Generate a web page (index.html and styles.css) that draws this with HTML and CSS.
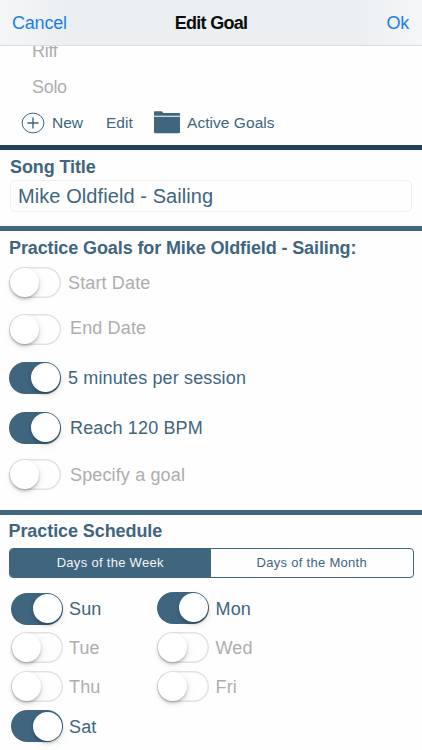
FILE: index.html
```html
<!DOCTYPE html>
<html lang="en">
<head>
    <meta charset="UTF-8">
    <meta name="viewport" content="width=device-width, initial-scale=1.0">
    <title>Edit Goal</title>
    <link rel="stylesheet" href="styles.css">
</head>
<body>
    <header class="navbar">
        <a class="nav-link">Cancel</a>
        <h1 class="nav-title">Edit Goal</h1>
        <a class="nav-link ok">Ok</a>
    </header>

    <section class="goal-list">
        <div class="list-item riff">Riff</div>
        <div class="list-item">Solo</div>
        <div class="toolbar">
            <svg class="icon-plus" width="24" height="22" viewBox="0 0 24 22" fill="none" stroke="#40657f">
                <ellipse cx="12" cy="11" rx="10.9" ry="9.9" stroke-width="1"/>
                <path d="M6.500 11h11M12 5.500v11" stroke-width="1.4"/>
            </svg>
            <span class="new">New</span>
            <span class="edit">Edit</span>
            <svg class="icon-folder" width="26" height="23" viewBox="0 0 26 23" fill="#40657f">
                <path d="M0 4.700V1.200Q0 .2 1 .2h6.500q.8 0 1.200 1l.4.9H25q1 0 1 1V4.700z"/>
                <path d="M0 5.700h26V21q0 1.200-1.200 1.200H1.200Q0 22.200 0 21z"/>
            </svg>
            <span class="active-goals">Active Goals</span>
        </div>
    </section>

    <section class="song">
        <h2 class="song-heading">Song Title</h2>
        <div class="song-input">Mike Oldfield - Sailing</div>
    </section>

    <section class="goals">
        <h2 class="goals-heading">Practice Goals for Mike Oldfield - Sailing:</h2>
        <div class="row start"><span class="switch"></span><span class="label">Start Date</span></div>
        <div class="row end"><span class="switch"></span><span class="label">End Date</span></div>
        <div class="row minutes on"><span class="switch"></span><span class="label">5 minutes per session</span></div>
        <div class="row reach on"><span class="switch"></span><span class="label">Reach 120 BPM</span></div>
        <div class="row specify"><span class="switch"></span><span class="label">Specify a goal</span></div>
    </section>

    <section class="schedule">
        <h2 class="schedule-heading">Practice Schedule</h2>
        <div class="segmented">
            <span class="segment selected">Days of the Week</span>
            <span class="segment">Days of the Month</span>
        </div>
        <div class="days">
            <div class="row sun on"><span class="switch"></span><span class="label">Sun</span></div>
            <div class="row mon on"><span class="switch"></span><span class="label">Mon</span></div>
            <div class="row tue"><span class="switch"></span><span class="label">Tue</span></div>
            <div class="row wed"><span class="switch"></span><span class="label">Wed</span></div>
            <div class="row thu"><span class="switch"></span><span class="label">Thu</span></div>
            <div class="row fri"><span class="switch"></span><span class="label">Fri</span></div>
            <div class="row sat on"><span class="switch"></span><span class="label">Sat</span></div>
        </div>
    </section>
</body>
</html>
```
FILE: styles.css
```css
* {
    box-sizing: border-box;
}
body {
    margin: 0;
    height: 750px;
    overflow: hidden;
    background: #fefefe;
    color: #40657f;
    font-family: "Liberation Sans", Arial, sans-serif;
    font-size: 18px;
    white-space: nowrap;
}
h1, h2 {
    margin: 0;
    font-weight: bold;
}

/* top bar */
.navbar {
    display: grid;
    grid-template-columns: 1fr auto 1fr;
    align-items: center;
    height: 46px;
    padding: 0 13px 0 12px;
    background: linear-gradient(90deg, #f5f6f7 0, #ebeff2 16%, #ebeff2 84%, #f5f6f7 100%);
    border-bottom: 1px solid #dcdfe1;
}
.nav-link {
    padding-top: 1px;
    color: #1a7df0;
    font-size: 18px;
    letter-spacing: -0.2px;
}
.ok {
    text-align: right;
}
.nav-title {
    padding: 2px 0 0 1px;
    color: #0b0c0d;
    font-size: 18px;
    letter-spacing: -0.7px;
}

/* goal list and toolbar */
.goal-list {
    height: 104px;
    overflow: hidden;
    border-bottom: 5px solid #263f5b;
}
.list-item {
    height: 36px;
    line-height: 36px;
    padding-left: 32px;
    color: #adadad;
    letter-spacing: -0.3px;
}
.riff {
    margin-top: -13px;
}
.toolbar {
    display: flex;
    align-items: center;
    height: 36px;
    padding-left: 21px;
    font-size: 15.5px;
}
.new {
    margin-left: 7px;
    width: 54px;
}
.edit {
    width: 48px;
}
.icon-folder {
    margin-bottom: 2px;
}
.active-goals {
    margin-left: 7px;
    letter-spacing: 0.05px;
}

/* song title */
.song {
    height: 81px;
    padding: 5px 10px 0;
    border-bottom: 5px solid #40657f;
}
.song-heading {
    height: 25px;
    line-height: 24px;
    font-size: 18px;
    letter-spacing: -0.1px;
}
.song-input {
    height: 32px;
    line-height: 31px;
    padding-left: 7px;
    border: 1px solid #efefef;
    border-radius: 5px;
    font-size: 20px;
    letter-spacing: 0.08px;
}

/* switches */
.row {
    display: flex;
    align-items: center;
    height: 31px;
    color: #adadad;
}
.row.on {
    color: #40657f;
}
.switch {
    flex: none;
    width: 52px;
    height: 31px;
    padding: 1px;
    border-radius: 16px;
    background: #fefefe;
    box-shadow: inset 0 0 0 1.5px #e2e2e2;
}
.switch::before {
    content: "";
    display: block;
    width: 29px;
    height: 29px;
    border-radius: 50%;
    background: #fff;
    box-shadow: 0 2px 3px rgba(0, 0, 0, 0.24), 1px 3px 8px rgba(0, 0, 0, 0.08);
}
.on .switch {
    height: 32px;
    padding: 1.5px 0 0 22px;
    background: #40657f;
    box-shadow: none;
}
.label {
    margin-left: 7px;
    letter-spacing: 0.14px;
}

/* practice goals */
.goals {
    height: 283.5px;
    padding-left: 9px;
    border-bottom: 5px solid #40657f;
}
.goals-heading {
    height: 36px;
    line-height: 34px;
    font-size: 18px;
    letter-spacing: -0.11px;
}
.end {
    margin-top: 16px;
}
.minutes {
    margin-top: 17px;
}
.reach {
    margin-top: 19px;
}
.specify {
    margin-top: 16px;
}
.goals .label {
    padding-top: 2px;
}
.end .label, .reach .label, .specify .label {
    margin-left: 9px;
}
.goals .end .label {
    padding: 0 0 3px;
}

/* practice schedule */
.schedule {
    padding-left: 8.5px;
}
.schedule-heading {
    height: 33px;
    line-height: 33px;
    font-size: 18px;
    letter-spacing: -0.08px;
}
.segmented {
    display: flex;
    width: 405px;
    height: 30px;
    border: 1px solid #40657f;
    border-radius: 4px;
    overflow: hidden;
}
.segment {
    flex: 1;
    line-height: 27px;
    text-align: center;
    font-size: 13px;
    letter-spacing: 0.3px;
}
.selected {
    background: #40657f;
    color: #f3f6f8;
}
.days {
    display: grid;
    grid-template-columns: 146.5px 146px;
    row-gap: 8px;
    padding: 15.5px 0 0 2px;
}
.days .label {
    margin-left: 6.5px;
    padding-top: 2px;
}
.mon .switch {
    margin-bottom: 2px;
}
.sat {
    margin-top: 0.5px;
}
```
